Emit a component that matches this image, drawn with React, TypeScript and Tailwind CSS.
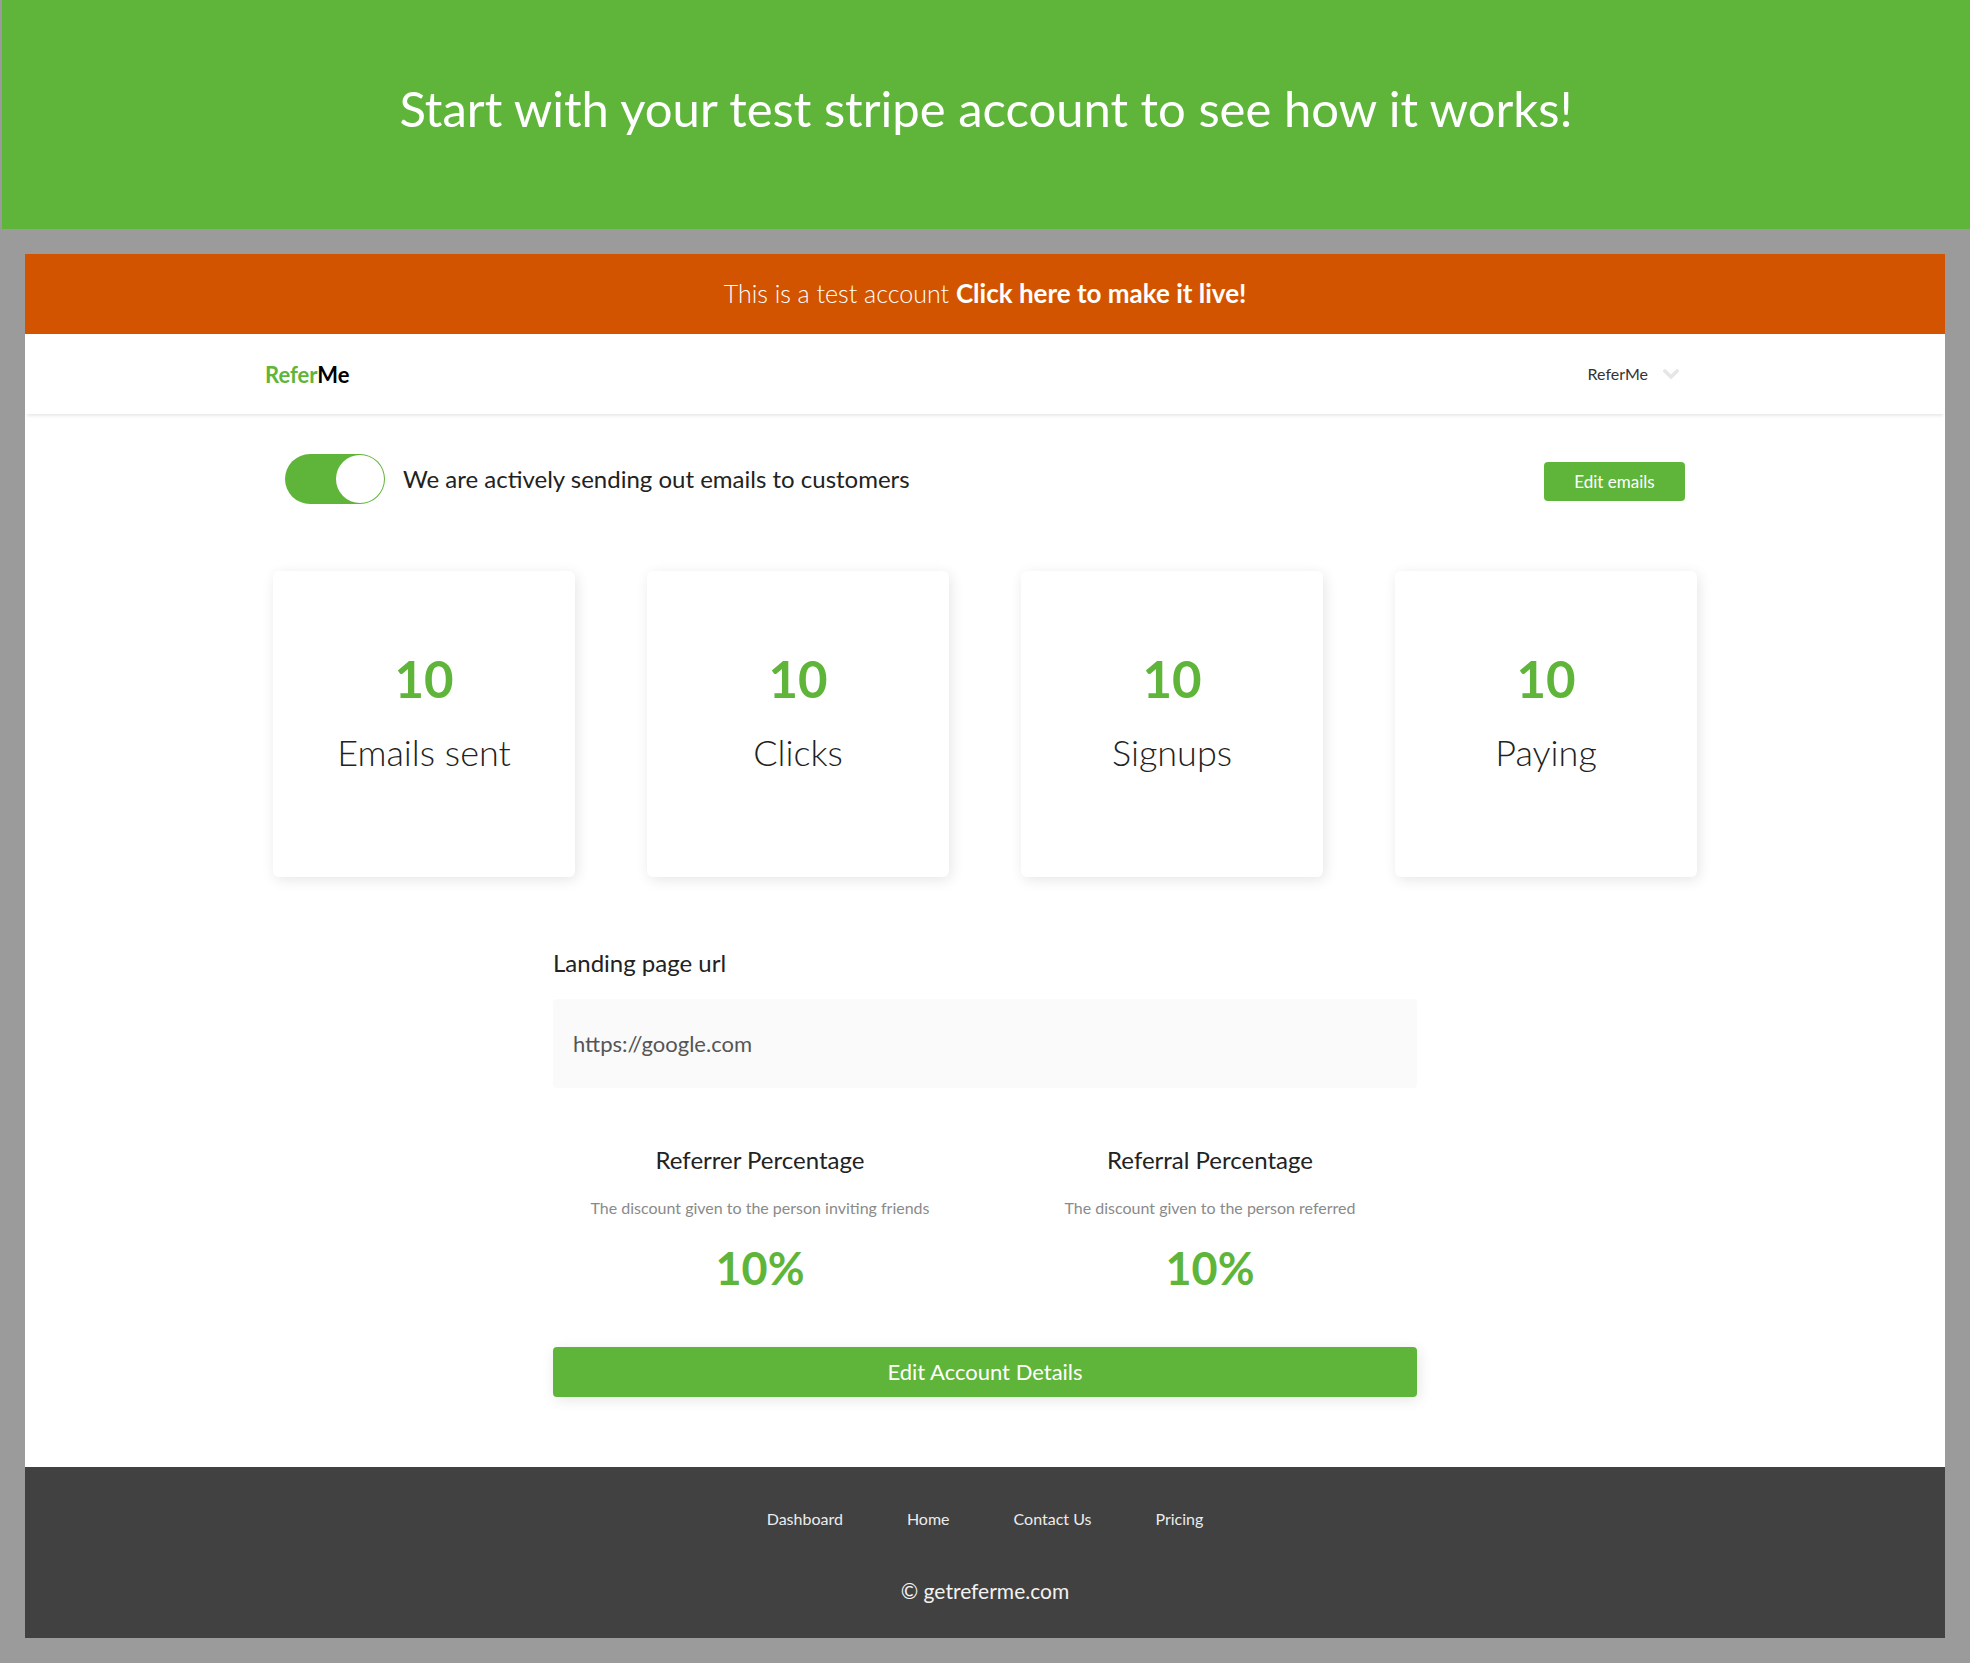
import React, { useState } from 'react';


const stats = [
    { label: 'Emails sent', value: 10 },
    { label: 'Clicks', value: 10 },
    { label: 'Signups', value: 10 },
    { label: 'Paying', value: 10 },
];

const discounts = [
    { title: 'Referrer Percentage', text: 'The discount given to the person inviting friends', value: '10%' },
    { title: 'Referral Percentage', text: 'The discount given to the person referred', value: '10%' },
];

const links = ['Dashboard', 'Home', 'Contact Us', 'Pricing'];


function Navbar() {
    return (
        <nav className="bg-white shadow-[0_4px_3px_-2px_rgba(0,0,0,0.09)]">
            <div className="w-3/4 h-20 mx-auto flex items-center justify-between">
                <a href="#" className="text-[22px] font-bold text-black">
                    <span className="text-[#5fb539]">Refer</span>Me
                </a>
                <button type="button" className="mr-[26px] flex items-center gap-[15px] text-base text-[#333333] cursor-pointer">
                    ReferMe
                    <svg className="w-4 h-2.5" viewBox="0 0 16 10" fill="none" stroke="#e6e6e6" strokeWidth="3.6" strokeLinecap="round">
                        <path d="M1.9 2 8 8 14.1 2" />
                    </svg>
                </button>
            </div>
        </nav>
    );
}

function Footer() {
    return (
        <footer className="bg-[#414141] text-white text-center pt-10 pb-8">
            <div className="flex justify-center gap-16 text-base leading-6">
                {links.map(link => (
                    <a key={link} href="#" className="text-[#ececec]">{link}</a>
                ))}
            </div>
            <p className="mt-[45px] text-[21px] leading-[30px] text-[#f2f2f2]">© getreferme.com</p>
        </footer>
    );
}


function App() {
    const [active, setActive] = useState(true);
    const [url, setUrl] = useState('https://google.com');

    return (
        <div className="min-h-screen bg-[#9b9b9b] pb-[25px] font-['Lato',sans-serif] text-[#222222]">
            <header className="ml-0.5 bg-[#5fb539] pt-[78px] pb-[91px] text-center">
                <h1 className="text-[49px] leading-[60px] text-white">Start with your test stripe account to see how it works!</h1>
            </header>

            <div className="mx-[25px] mt-[25px] bg-white">
                <div className="h-20 pb-0.5 bg-[#d35400] flex items-center justify-center text-[25px] text-white">
                    <p>
                        <span className="font-light">This is a test account </span>
                        <a href="#" className="text-[26px] font-bold">Click here to make it live!</a>
                    </p>
                </div>

                <Navbar />

                <main className="w-3/4 mx-auto pt-10 pb-[70px]">
                    <div className="px-5 flex items-start justify-between">
                        <label className="flex items-center gap-[18px] text-2xl cursor-pointer">
                            <input
                                type="checkbox"
                                role="switch"
                                checked={active}
                                onChange={e => setActive(e.target.checked)}
                                className="appearance-none w-[100px] h-[50px] p-px rounded-full bg-gray-300 checked:bg-[#5fb539] before:block before:w-12 before:h-12 before:rounded-full before:bg-white checked:before:ml-auto"
                            />
                            We are actively sending out emails to customers
                        </label>
                        <button type="button" className="mt-2 w-[141px] h-[39px] rounded bg-[#5fb539] text-[17px] text-white cursor-pointer">
                            Edit emails
                        </button>
                    </div>

                    <div className="mt-[67px] px-2 grid grid-cols-4 gap-[72px]">
                        {stats.map(stat => (
                            <div key={stat.label} className="pt-[78px] pb-[102px] rounded-md bg-white text-center shadow-[2px_3px_14px_rgba(0,0,0,0.1)]">
                                <p className="text-[51px] leading-[60px] font-bold text-[#5fb539]">{stat.value}</p>
                                <p className="mt-5 text-4xl leading-[46px] font-light">{stat.label}</p>
                            </div>
                        ))}
                    </div>

                    <form className="w-3/5 mx-auto mt-[70px]" onSubmit={e => e.preventDefault()}>
                        <label htmlFor="landing" className="block mb-5 text-2xl leading-8">Landing page url</label>
                        <input
                            id="landing"
                            type="text"
                            value={url}
                            onChange={e => setUrl(e.target.value)}
                            className="block w-full h-[89px] px-5 rounded bg-[#fafafa] text-[22px] text-[#555555] outline-none"
                        />

                        <div className="-mx-[18px] mt-14 grid grid-cols-2 text-center">
                            {discounts.map(item => (
                                <div key={item.title}>
                                    <h2 className="text-2xl leading-8">{item.title}</h2>
                                    <p className="mt-5 text-base leading-6 text-[#8a8a8a]">{item.text}</p>
                                    <p className="mt-[22px] text-[45px] leading-[52px] font-bold text-[#5fb539]">{item.value}</p>
                                </div>
                            ))}
                        </div>

                        <button type="submit" className="mt-[53px] pb-0.5 block w-full h-[50px] rounded bg-[#5fb539] text-[22px] text-white shadow-[2px_3px_14px_rgba(0,0,0,0.1)] cursor-pointer">
                            Edit Account Details
                        </button>
                    </form>
                </main>

                <Footer />
            </div>
        </div>
    );
}

export default App;
